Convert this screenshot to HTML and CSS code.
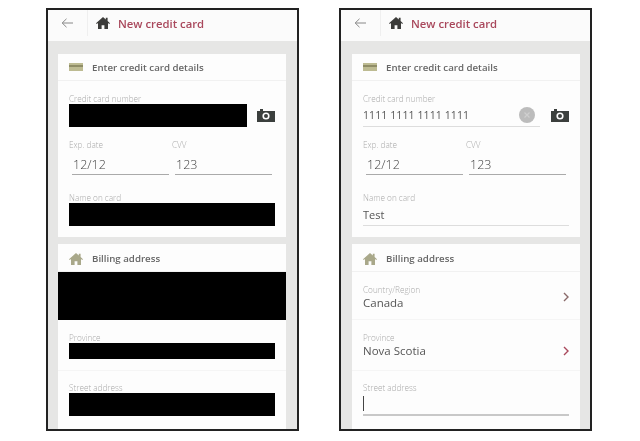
FILE: index.html
```html
<!DOCTYPE html>
<html lang="en">
<head>
    <meta charset="UTF-8" />
    <title>New credit card</title>
    <link rel="stylesheet" href="styles.css">
</head>
<body>
    <div class="page">
        <!-- left phone, details blacked out -->
        <div class="phone">
            <div class="topbar">
                <svg class="back" viewBox="0 0 12 10"><path d="M5.5 .8 1.2 5l4.3 4.2M1.2 5H12" /></svg>
                <div class="topbar-title">
                    <svg class="house dark" viewBox="0 0 14 12"><path d="M7 0 0 6.2l.8.9L2 6v6h3.6V8.2h2.8V12H12V6l1.2 1.1.8-.9L11.6 4V.8H9.8v1.6z" /></svg>
                    <span>New credit card</span>
                </div>
            </div>
            <div class="content">
                <div class="card">
                    <div class="card-head">
                        <svg class="card-icon" viewBox="0 0 14 8"><rect width="14" height="8" fill="#bdbb92" /><rect y="2" width="14" height="2" fill="#8f8d66" /></svg>
                        <span>Enter credit card details</span>
                    </div>
                    <div class="card-body">
                        <label>Credit card number</label>
                        <div class="number-row">
                            <div class="redact number-redact"></div>
                            <svg class="camera" viewBox="0 0 18 13"><path d="M3 0h3v2h12v11H0V2h3zM9 3.4a3.6 3.6 0 1 0 0 7.2 3.6 3.6 0 0 0 0-7.2zm0 1.6a2 2 0 1 1 0 4 2 2 0 0 1 0-4z" fill-rule="evenodd" /></svg>
                        </div>
                        <div class="split">
                            <div class="split-col">
                                <label>Exp. date</label>
                                <div class="short-input">12/12</div>
                            </div>
                            <div class="split-col">
                                <label>CVV</label>
                                <div class="short-input">123</div>
                            </div>
                        </div>
                        <label class="name-label">Name on card</label>
                        <div class="redact tall-redact"></div>
                    </div>
                </div>
                <div class="card billing">
                    <div class="card-head billing-head">
                        <svg class="house olive" viewBox="0 0 14 12"><path d="M7 0 0 6.2l.8.9L2 6v6h3.6V8.2h2.8V12H12V6l1.2 1.1.8-.9L11.6 4V.8H9.8v1.6z" /></svg>
                        <span>Billing address</span>
                    </div>
                    <div class="redact country-redact"></div>
                    <div class="select-row">
                        <div class="select-text">
                            <label>Province</label>
                            <div class="redact province-redact"></div>
                        </div>
                    </div>
                    <div class="street-row">
                        <label>Street address</label>
                        <div class="redact tall-redact"></div>
                    </div>
                </div>
            </div>
        </div>

        <!-- right phone, filled in -->
        <div class="phone">
            <div class="topbar">
                <svg class="back" viewBox="0 0 12 10"><path d="M5.5 .8 1.2 5l4.3 4.2M1.2 5H12" /></svg>
                <div class="topbar-title">
                    <svg class="house dark" viewBox="0 0 14 12"><path d="M7 0 0 6.2l.8.9L2 6v6h3.6V8.2h2.8V12H12V6l1.2 1.1.8-.9L11.6 4V.8H9.8v1.6z" /></svg>
                    <span>New credit card</span>
                </div>
            </div>
            <div class="content">
                <div class="card">
                    <div class="card-head">
                        <svg class="card-icon" viewBox="0 0 14 8"><rect width="14" height="8" fill="#bdbb92" /><rect y="2" width="14" height="2" fill="#8f8d66" /></svg>
                        <span>Enter credit card details</span>
                    </div>
                    <div class="card-body">
                        <label>Credit card number</label>
                        <div class="number-row">
                            <div class="number-input">
                                <span>1111 1111 1111 1111</span>
                                <svg class="clear" viewBox="0 0 16 16"><circle cx="8" cy="8" r="8" fill="#bcbcbc" /><path d="M5.5 5.5l5 5m0-5-5 5" stroke="#cfcfcf" stroke-width="1.2" /></svg>
                            </div>
                            <svg class="camera" viewBox="0 0 18 13"><path d="M3 0h3v2h12v11H0V2h3zM9 3.4a3.6 3.6 0 1 0 0 7.2 3.6 3.6 0 0 0 0-7.2zm0 1.6a2 2 0 1 1 0 4 2 2 0 0 1 0-4z" fill-rule="evenodd" /></svg>
                        </div>
                        <div class="split">
                            <div class="split-col">
                                <label>Exp. date</label>
                                <div class="short-input">12/12</div>
                            </div>
                            <div class="split-col">
                                <label>CVV</label>
                                <div class="short-input">123</div>
                            </div>
                        </div>
                        <label class="name-label">Name on card</label>
                        <div class="text-input">Test</div>
                    </div>
                </div>
                <div class="card billing">
                    <div class="card-head billing-head">
                        <svg class="house olive" viewBox="0 0 14 12"><path d="M7 0 0 6.2l.8.9L2 6v6h3.6V8.2h2.8V12H12V6l1.2 1.1.8-.9L11.6 4V.8H9.8v1.6z" /></svg>
                        <span>Billing address</span>
                    </div>
                    <div class="select-row country-row">
                        <div class="select-text">
                            <label>Country/Region</label>
                            <div class="select-value">Canada</div>
                        </div>
                        <svg class="chevron" viewBox="0 0 6 10"><path d="M1 1l4 4-4 4" /></svg>
                    </div>
                    <div class="select-row">
                        <div class="select-text">
                            <label>Province</label>
                            <div class="select-value">Nova Scotia</div>
                        </div>
                        <svg class="chevron low" viewBox="0 0 6 10"><path d="M1 1l4 4-4 4" /></svg>
                    </div>
                    <div class="street-row">
                        <label>Street address</label>
                        <div class="text-input"><span class="caret"></span></div>
                    </div>
                </div>
            </div>
        </div>
    </div>
</body>
</html>
```

FILE: styles.css
```css
:root {
    --title-color: #a9485c;
    --text-color: #555;
    --label-color: #aaa;
    --page-gray: #e6e6e5;
}

body {
    font-family: "Open Sans", sans-serif;
    background-color: #fff;
    color: var(--text-color);
    margin: 0;
    padding: 0;
}

.page {
    display: flex;
    gap: 40px;
    padding: 8px 0 0 46px;
}

.phone {
    width: 253px;
    height: 423px;
    box-sizing: border-box;
    border: 2px solid #222;
    overflow: hidden;
    filter: blur(0.35px);
}

.topbar {
    display: flex;
    align-items: center;
    height: 31px;
    box-sizing: border-box;
    padding-bottom: 5px;
    background-color: #fbfbfb;
}

.back {
    width: 12px;
    height: 10px;
    margin: 0 14px 0 13px;
    fill: none;
    stroke: #888;
    stroke-width: 1;
}

.topbar-title {
    display: flex;
    align-items: center;
    height: 26px;
    padding-left: 8px;
    border-left: 1px solid #efefef;
    color: var(--title-color);
    font-size: 11.3px;
    font-weight: 600;
}

.house {
    width: 14px;
    height: 12px;
    margin-right: 8px;
}

.house.dark {
    fill: #3c3c3a;
}

.house.olive {
    fill: #a9a88a;
    margin-right: 9px;
}

.content {
    display: flex;
    flex-direction: column;
    gap: 7px;
    height: 390px;
    box-sizing: border-box;
    padding: 13px 11px 0 10px;
    background-color: var(--page-gray);
}

.phone + .phone .content {
    padding: 13px 10px 0 11px;
}

.card {
    background-color: #fdfdfd;
}

.billing {
    flex: 1;
}

.card-head {
    display: flex;
    align-items: center;
    height: 27px;
    box-sizing: border-box;
    padding-left: 11px;
    font-size: 9.7px;
    font-weight: 600;
    color: #666;
    border-bottom: 1px solid #f1f1f1;
}

.billing-head {
    height: 28px;
    padding-top: 2px;
}

.card-icon {
    width: 14px;
    height: 8px;
    margin-right: 9px;
}

.card-body {
    padding: 12px 11px 11px;
}

label {
    display: block;
    height: 11px;
    line-height: 11px;
    font-size: 8.2px;
    font-weight: 300;
    color: var(--label-color);
}

.number-row {
    display: flex;
    align-items: center;
    justify-content: space-between;
    height: 23px;
}

.redact {
    background-color: #000;
}

.number-redact {
    width: 178px;
    height: 23px;
}

.number-input {
    display: flex;
    align-items: center;
    justify-content: space-between;
    width: 177px;
    height: 23px;
    box-sizing: border-box;
    border-bottom: 1px solid #ddd;
    padding-right: 5px;
    font-size: 10.5px;
    letter-spacing: 0.1px;
}

.clear {
    width: 16px;
    height: 16px;
}

.camera {
    width: 18px;
    height: 13px;
    fill: #3b3f3d;
}

.split {
    display: flex;
    gap: 3px;
    margin-top: 12px;
}

.split-col {
    width: 100px;
}

.short-input {
    height: 25px;
    line-height: 29px;
    box-sizing: border-box;
    margin-left: 3px;
    padding-left: 1px;
    border-bottom: 1px solid #aaa;
    font-size: 12.5px;
    font-weight: 300;
    color: #444;
}

.name-label {
    margin-top: 17px;
}

.tall-redact {
    height: 23px;
}

.text-input {
    display: flex;
    align-items: center;
    height: 23px;
    box-sizing: border-box;
    border-bottom: 1px solid #ddd;
    font-size: 11px;
}

.country-redact {
    height: 48px;
}

.select-row {
    display: flex;
    align-items: flex-start;
    justify-content: space-between;
    height: 51px;
    box-sizing: border-box;
    padding: 12px 11px 0;
    border-bottom: 1px solid #f5f5f5;
}

.country-row {
    height: 48px;
}

.select-text {
    flex: 1;
}

.select-value {
    height: 15px;
    line-height: 15px;
    font-size: 11.5px;
}

.province-redact {
    height: 16px;
}

.chevron {
    width: 6px;
    height: 10px;
    margin-top: 8px;
    fill: none;
    stroke: #8a6a6a;
    stroke-width: 1.4;
}

.chevron.low {
    margin-top: 14px;
    stroke: #a9485c;
}

.street-row {
    padding: 11px 11px 0;
}

.street-row .text-input {
    border-bottom: 2px solid #c8c8c8;
}

.caret {
    width: 1px;
    height: 15px;
    background-color: #444;
}
```
